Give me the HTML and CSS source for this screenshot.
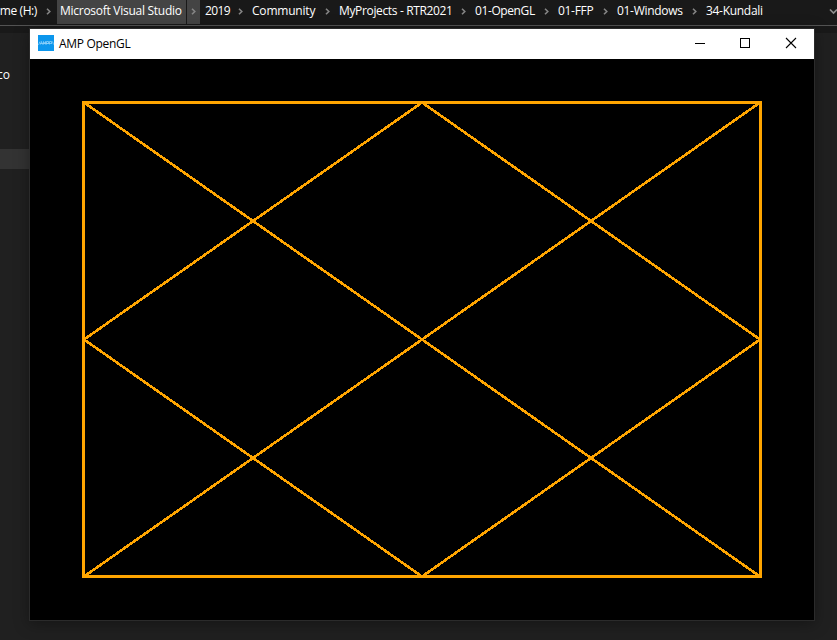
FILE: index.html
```html
<!DOCTYPE html>
<html lang="en">
<head>
<meta charset="utf-8">
<title>AMP OpenGL</title>
<link rel="stylesheet" href="styles.css">
</head>
<body>
<svg width="0" height="0" class="defs"><symbol id="chev" viewBox="0 0 5 7"><path d="M1 .7 3.8 3.500 1 6.300" fill="none" stroke="#858585" stroke-width="1.6"/></symbol></svg>
<header class="address">
  <nav class="crumbs">
    <span class="crumb drive">me (H:)</span><svg class="chev first"><use href="#chev"/></svg>
    <span class="crumb hot">Microsoft Visual Studio</span><span class="hot-arrow"><svg class="chev"><use href="#chev"/></svg></span>
    <span class="crumb c1">2019</span><svg class="chev"><use href="#chev"/></svg>
    <span class="crumb c2">Community</span><svg class="chev"><use href="#chev"/></svg>
    <span class="crumb c3">MyProjects - RTR2021</span><svg class="chev"><use href="#chev"/></svg>
    <span class="crumb c4">01-OpenGL</span><svg class="chev"><use href="#chev"/></svg>
    <span class="crumb c5">01-FFP</span><svg class="chev"><use href="#chev"/></svg>
    <span class="crumb c6">01-Windows</span><svg class="chev"><use href="#chev"/></svg>
    <span class="crumb c7">34-Kundali</span>
  </nav>
  <svg class="drop" viewBox="0 0 9 8"><path d="M1 1.500 4.500 5 8 1.500" fill="none" stroke="#8c8c8c" stroke-width="1.7"/></svg>
</header>
<div class="strip"></div>
<main class="desktop">
  <aside class="tree"><div class="node">co</div><div class="selected"></div></aside>
</main>
<section class="window">
  <div class="titlebar">
    <svg class="app-icon" viewBox="0 0 16 16"><path fill="#0c96ec" d="M0 0h16v16H0z"/><path d="M.5 10 2 6.500M2.500 9.500l1-3 1 3M5.500 9.500v-3l1 2 1-2v3M8.500 9.500v-3h2v2h-2M11.500 9.500v-3h2v2M14.500 6.500l1 3M2 8.500h12" fill="none" stroke="#8bd0fa" stroke-width=".8"/></svg>
    <span class="title">AMP OpenGL</span>
    <svg class="controls" width="135" height="30" viewBox="0 0 135 30" fill="none" stroke="#000" shape-rendering="crispEdges"><path d="M16 14.500h10M61.500 9.500h9v9h-9z"/><path d="m107 9 10 10m0-10-10 10" shape-rendering="auto" stroke-width="1.1"/></svg>
  </div>
  <svg class="canvas" width="784" height="561" viewBox="30 59 784 561" fill="none" stroke="#ffa500" shape-rendering="crispEdges">
    <path stroke-width="3" d="M83.500 102.500h677v474h-677z"/>
    <path stroke-width="2.600" d="M84 102.500 760 576.500M760 102.500 84 576.500"/>
    <path stroke-width="2.600" stroke-linejoin="bevel" d="M422 102.500 84 339.500 422 576.500 760 339.500z"/>
  </svg>
</section>
</body>
</html>
```
FILE: styles.css
```css
* { box-sizing: border-box; }
body {
  margin: 0;
  width: 837px;
  height: 640px;
  overflow: hidden;
  position: relative;
  background: #202020;
  color: #fff;
  font: 12px/16px "Open Sans", "Noto Sans", sans-serif;
}
svg { display: block; flex: none; }
.defs { position: absolute; }
.address {
  display: flex;
  justify-content: space-between;
  height: 26px;
  background: #191919;
  border-bottom: 1px solid #535353;
}
.crumbs { display: flex; align-items: center; height: 24px; padding-bottom: 2px; }
.crumb { flex: none; white-space: nowrap; height: 16px; letter-spacing: -0.3px; }
.chev { width: 5px; height: 7px; margin: 0 9px; }
.drive { width: 37px; display: flex; justify-content: flex-end; letter-spacing: -0.4px; }
.first { margin: 0 6px 0 9px; }
.hot { width: 129px; height: 24px; padding: 3px 0 0 3px; margin-top: 2px; background: #444; letter-spacing: -0.27px; }
.hot-arrow {
  display: flex;
  align-items: center;
  width: 14px;
  height: 24px;
  margin: 2px 5px 0 0;
  border-left: 1px solid #191919;
  background: #444;
}
.hot-arrow .chev { margin: 0 4px 2px; }
.c1 { width: 24px; letter-spacing: -0.6px; }
.c2 { width: 64px; letter-spacing: -0.2px; }
.c3 { width: 113px; letter-spacing: -0.35px; }
.c4 { width: 60px; letter-spacing: -0.4px; }
.c5 { width: 36px; }
.c6 { width: 66px; }
.c7 { width: 58px; }
.drop { width: 9px; height: 8px; margin: 8px -1px 0 0; }
.strip { height: 7px; background: #191919; }
.desktop { height: 607px; }
.tree { width: 30px; padding-top: 34px; }
.node { height: 16px; margin-left: -3px; }
.selected { height: 20px; margin-top: 66px; background: #333; }
.window {
  position: absolute;
  left: 29px;
  top: 28px;
  width: 786px;
  height: 593px;
  border: 1px solid #2b2b2b;
  background: #000;
  box-shadow: 0 3px 14px rgba(0, 0, 0, 0.35);
}
.titlebar { display: flex; align-items: center; height: 30px; padding-left: 8px; background: #fff; color: #000; }
.app-icon { width: 16px; height: 16px; margin: -2px 5px 0 0; }
.title { letter-spacing: -0.3px; }
.controls { margin-left: auto; }
```
